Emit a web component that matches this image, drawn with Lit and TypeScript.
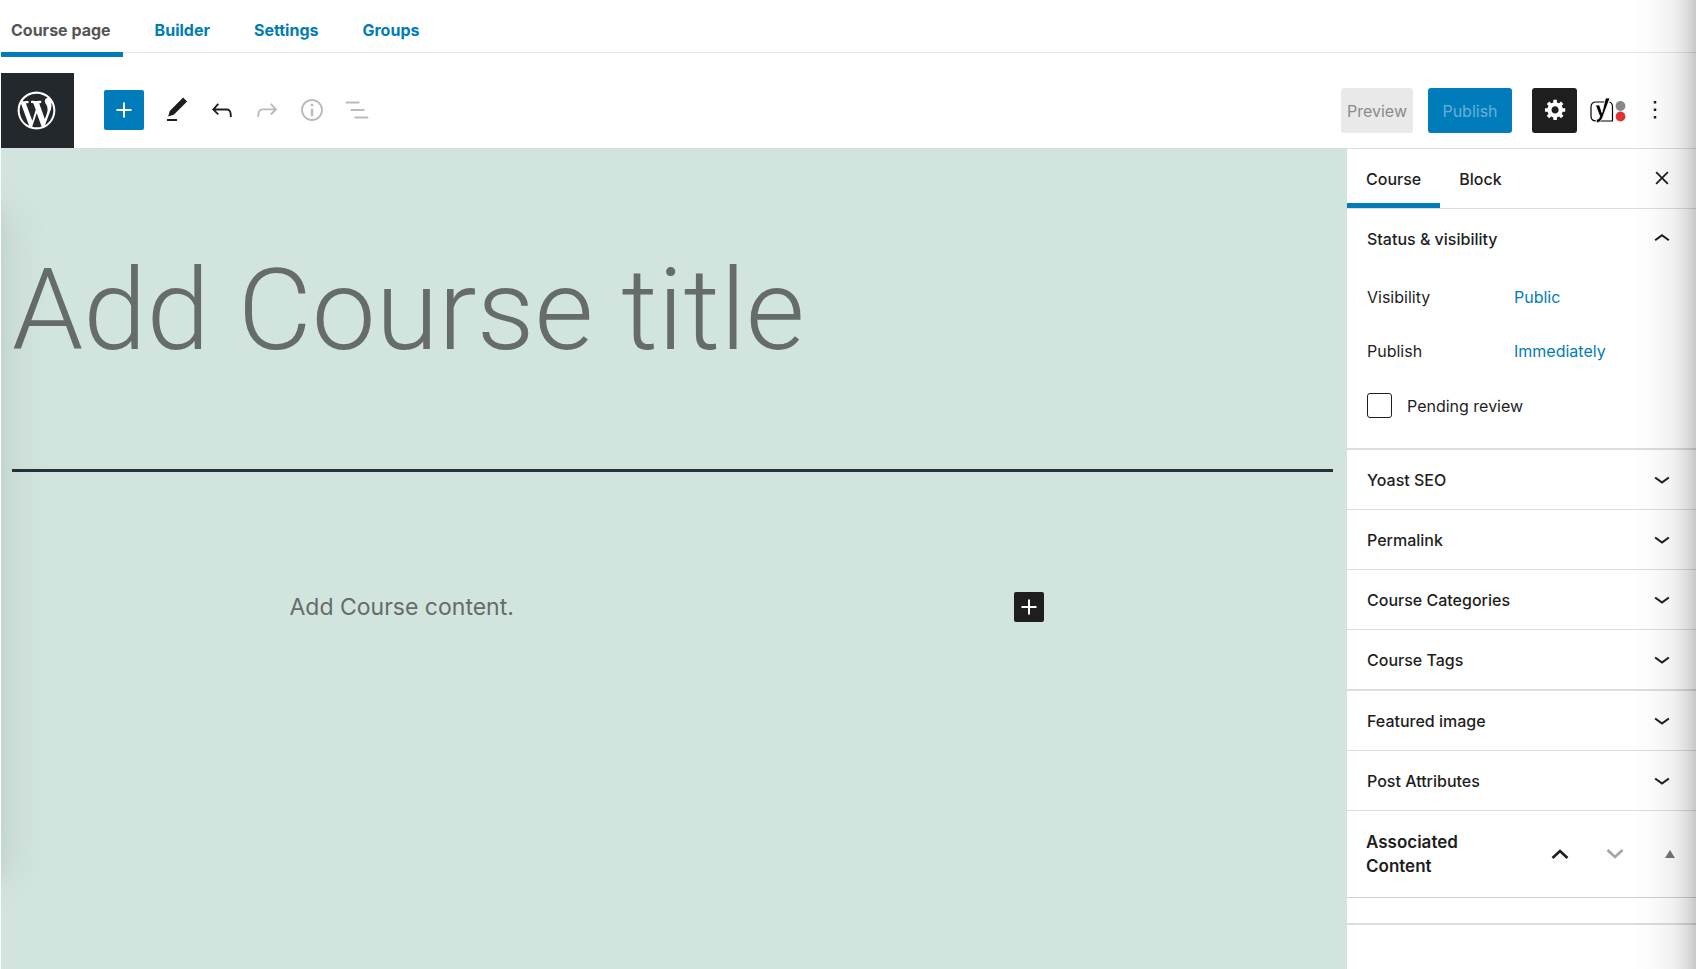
import { LitElement, html, css, svg } from "lit";
import { customElement, state } from "lit/decorators.js";

const chevronDown = html`<svg class="chev" viewBox="0 0 24 24" width="30" height="30" aria-hidden="true">
  <path d="M17 9.4L12 13 7 9.4l-1 1.2 6 4.4 6-4.4z" /></svg>`;
const chevronUp = html`<svg class="chev" viewBox="0 0 24 24" width="30" height="30" aria-hidden="true">
  <path d="M12 8l-6 4.4 1 1.2 5-3.6 5 3.6 1-1.2z" /></svg>`;
const plus = (size: number) => html`<svg viewBox="0 0 24 24" width=${size} height=${size} aria-hidden="true">
  <path d="M18 11.2h-5.2V6h-1.6v5.2H6v1.6h5.2V18h1.6v-5.2H18z" /></svg>`;

const tool = (paths: unknown) =>
  html`<svg viewBox="0 0 24 24" width="30" height="30" aria-hidden="true">${paths}</svg>`;

const tools = [
  { label: "Tools", off: false, art: svg`<path d="M20.1 5.1L16.9 2 6.2 12.7l-1.3 4.4 4.5-1.3L20.1 5.1zM4 19.2V20.8H12V19.2H4z" /> ` },
  { label: "Undo", off: false, art: svg`<path d="M18.3 11.7c-.6-.6-1.4-.9-2.3-.9H6.7l2.9-3.3-1.1-1-4.5 5L8.5 16l1-1-2.7-2.7H16c.5 0 .9.2 1.3.5 1 1 1 3.4 1 4.500v.3h1.500v-.2c0-1.500 0-4.300-1.500-5.700z" />` },
  { label: "Redo", off: true, art: svg`<path d="M15.600 6.500l-1.100 1 2.900 3.300H8c-.9 0-1.700.3-2.300.9-1.400 1.500-1.400 4.200-1.400 5.600v.2h1.500v-.3c0-1.100 0-3.500 1-4.500.3-.3.7-.5 1.300-.5h9.200L14.500 15l1.100 1.100 4.600-4.600-4.600-5z" />` },
  { label: "Details", off: true, art: svg`<path d="M12 3.200c-4.800 0-8.800 3.900-8.800 8.800 0 4.800 3.900 8.800 8.800 8.800 4.800 0 8.800-3.900 8.800-8.800 0-4.800-4-8.800-8.800-8.800zm0 16c-4 0-7.200-3.300-7.200-7.200C4.800 8 8 4.800 12 4.800s7.200 3.300 7.200 7.200c0 4-3.200 7.200-7.200 7.200zM11 17h2v-6h-2v6zm0-8h2V7h-2v2z" />` },
  { label: "Outline", off: true, art: svg`<path d="M3 5.200h11v1.600H3zM7 11.200h11v1.600H7zM10 17.200h11v1.600H10z" />` },
];

@customElement("app-root")
export class AppRoot extends LitElement {
  @state() private pending = false;

  static styles = css`
    :host {
      display: block;
      --blue: #007cba;
      --ink: #1e1e1e;
      --line: #ddd;
      font-family: Inter, "Liberation Sans", sans-serif;
      font-size: 16px;
      line-height: 24px;
      color: var(--ink);
    }
    * { box-sizing: border-box; }
    a { color: var(--blue); text-decoration: none; }
    button {
      font: inherit;
      color: inherit;
      background: none;
      border: 0;
      padding: 0;
      cursor: pointer;
    }
    svg { display: block; fill: currentColor; }
    .page {
      position: relative;
      display: flex;
      flex-direction: column;
      min-height: 100vh;
      padding-left: 1px;
      background: #fff;
    }
    .edge {
      position: absolute;
      inset: 0 0 0 auto;
      width: 64px;
      pointer-events: none;
      background: linear-gradient(to right, rgba(0, 0, 0, 0), rgba(0, 0, 0, 0.02) 35%, rgba(0, 0, 0, 0.06) 65%, rgba(0, 0, 0, 0.13) 85%, rgba(0, 0, 0, 0.22));
    }
    .tabs {
      display: flex;
      gap: 20px;
      height: 53px;
      border-bottom: 1px solid #e2e4e7;
      font-weight: 700;
    }
    .tabs a { height: 57px; padding: 18px 12px 0; }
    .tabs a.on { color: #555; border-bottom: 5px solid var(--blue); padding: 18px 12px 0 10px; }
    .bar {
      display: flex;
      align-items: center;
      height: 76px;
      margin-top: 20px;
      border-bottom: 1px solid var(--line);
    }
    .wp {
      display: flex;
      align-items: center;
      justify-content: center;
      width: 73px;
      height: 75px;
      padding-right: 2px;
      background: #23282d;
      color: #fff;
    }
    .tools { display: flex; align-items: center; gap: 15px; margin-left: 30px; padding-bottom: 2px; }
    .tools button { width: 30px; }
    .tools button:disabled { color: #bbb; }
    .tools .add, .insert {
      display: flex;
      align-items: center;
      justify-content: center;
      border-radius: 2px;
      color: #fff;
    }
    .tools .add { width: 40px; height: 40px; margin-right: 3px; background: var(--blue); }
    .actions { display: flex; align-items: center; margin-left: auto; margin-right: 26px; }
    .actions button { height: 45px; border-radius: 3px; }
    .preview { width: 72px; margin-right: 15px; background: #e9e9e9; color: #8a8a8a; }
    .publish { width: 84px; margin-right: 20px; background: var(--blue); color: #66b0d6; }
    .gear {
      display: flex;
      align-items: center;
      justify-content: center;
      width: 45px;
      margin-right: 13px;
      background: var(--ink);
      color: #fff;
    }
    .yoast { margin-right: 14px; }
    .main { display: flex; flex: 1; }
    .canvas {
      position: relative;
      flex: 1;
      min-width: 0;
      overflow: hidden;
      background: #d1e4dd;
    }
    .shade {
      position: absolute;
      left: -20px;
      top: 60px;
      width: 20px;
      bottom: 92px;
      box-shadow: 0 0 50px rgba(0, 0, 0, 0.14), 0 0 16px rgba(0, 0, 0, 0.05);
    }
    .title {
      display: block;
      margin: 0 13px 0 11px;
      padding: 83px 0 81px;
      border-bottom: 3px solid #28303d;
      font-family: Roboto, Inter, sans-serif;
      font-size: 114px;
      line-height: 156px;
      font-weight: 300;
    }
    .title input, .content input {
      display: block;
      width: 100%;
      height: 156px;
      padding: 0;
      border: 0;
      outline: 0;
      background: none;
      font: inherit;
      color: inherit;
    }
    .title input::placeholder, .content input::placeholder { color: #656c69; opacity: 1; }
    .content {
      display: flex;
      align-items: center;
      width: 768px;
      max-width: 90%;
      padding-right: 14px;
      margin: 119px auto 0;
      font-size: 23px;
      line-height: 32px;
    }
    .content input { flex: 1; height: 32px; }
    .insert { width: 30px; height: 30px; background: var(--ink); }
    .side {
      width: 350px;
      border-left: 1px solid var(--line);
      background: #fff;
      font-size: 16px;
    }
    .sidetabs { display: flex; height: 60px; border-bottom: 1px solid var(--line); font-weight: 500; }
    .sidetabs button { height: 59px; padding: 0 19px; }
    .sidetabs .on { border-bottom: 5px solid var(--blue); padding-top: 5px; }
    .sidetabs .close { margin-left: auto; padding: 0 0 2px; margin-right: 19px; }
    .panel { border-bottom: 1px solid var(--line); }
    .panel.thick { border-bottom-width: 2px; }
    .head {
      display: flex;
      align-items: center;
      justify-content: space-between;
      width: 100%;
      height: 59px;
      padding: 0 19px 0 20px;
      font-weight: 500;
      text-align: left;
    }
    .fields { display: flex; flex-direction: column; gap: 30px; padding: 17px 20px 30px; }
    .field { display: flex; height: 24px; }
    .field span { width: 147px; }
    .check { display: flex; align-items: center; gap: 15px; height: 25px; }
    .check input {
      appearance: none;
      width: 25px;
      height: 25px;
      margin: 0;
      border: 1px solid var(--ink);
      border-radius: 3px;
      background: #fff;
    }
    .check input:checked { background: var(--blue); }
    .assoc {
      display: flex;
      align-items: center;
      height: 87px;
      padding: 0 16px 0 19px;
      border-bottom: 1px solid #ccd0d4;
    }
    .assoc h2 { flex: 1; margin: 0; font-size: 17px; line-height: 24px; font-weight: 600; }
    .order { display: flex; align-items: center; }
    .order button { display: flex; align-items: center; justify-content: center; width: 55px; height: 55px; }
    .order button:disabled { color: #a0a5aa; }
    .order .fold { width: 20px; margin-left: 18px; color: #72777c; }
    .rest { height: 27px; border-bottom: 2px solid var(--line); }
  `;

  private panel(name: string, thick = false) {
    return html`<section class="panel ${thick ? "thick" : ""}">
      <button class="head" aria-expanded="false">${name}${chevronDown}</button>
    </section>`;
  }

  render() {
    return html`
      <div class="page">
        <nav class="tabs">
          <a class="on" href="#page">Course page</a>
          <a href="#builder">Builder</a>
          <a href="#settings">Settings</a>
          <a href="#groups">Groups</a>
        </nav>
        <header class="bar">
          <a class="wp" href="#home" aria-label="WordPress">
            <svg viewBox="0 0 20 20" width="45" height="45">
              <path d="M20 10c0-5.510-4.490-10-10-10C4.480 0 0 4.490 0 10c0 5.520 4.480 10 10 10 5.510 0 10-4.480 10-10zM7.780 15.370L4.370 6.220c.55-.02 1.170-.08 1.170-.08.5-.06.44-1.130-.06-1.110 0 0-1.450.11-2.370.11-.18 0-.37 0-.58-.01C4.120 2.690 6.870 1.110 10 1.110c2.330 0 4.450.87 6.050 2.340-.68-.11-1.650.39-1.650 1.580 0 .74.45 1.360.9 2.100.35.61.55 1.360.55 2.460 0 1.490-1.400 5-1.400 5l-3.030-8.370c.54-.02.82-.17.82-.17.5-.05.44-1.250-.06-1.220 0 0-1.440.12-2.380.12-.87 0-2.330-.12-2.330-.12-.5-.03-.56 1.200-.06 1.220l.92.08 1.260 3.410zM17.410 10c.24-.64.74-1.870.43-4.250.7 1.290 1.050 2.710 1.050 4.250 0 3.290-1.730 6.240-4.400 7.780.97-2.590 1.940-5.200 2.920-7.780zM6.100 18.090C3.120 16.650 1.110 13.530 1.110 10c0-1.300.23-2.480.72-3.590C3.250 10.300 4.670 14.200 6.100 18.090zm4.030-6.630l2.580 6.980c-.86.29-1.760.45-2.710.45-.79 0-1.570-.11-2.290-.33.81-2.380 1.620-4.740 2.420-7.100z" transform="translate(1.600 1.600) scale(.84)" />
            </svg>
          </a>
          <div class="tools">
            <button class="add" aria-label="Add block">${plus(30)}</button>
            ${tools.map((t) => html`<button aria-label=${t.label} ?disabled=${t.off}>${tool(t.art)}</button>`)}
          </div>
          <div class="actions">
            <button class="preview">Preview</button>
            <button class="publish">Publish</button>
            <button class="gear" aria-label="Settings">
              <svg viewBox="-1 0 21 21" width="25" height="25">
                <path fill-rule="evenodd" transform="translate(.5 -.5)" d="M18 12h-2.180c-.17.700-.44 1.350-.81 1.930l1.540 1.540-2.100 2.100-1.540-1.540c-.58.36-1.230.63-1.910.79V19H8v-2.180c-.68-.16-1.330-.43-1.910-.79l-1.540 1.540-2.120-2.120 1.540-1.540c-.36-.58-.63-1.230-.79-1.910H1V9.030h2.170c.16-.70.44-1.350.80-1.940L2.430 5.550l2.100-2.100 1.540 1.540c.58-.37 1.240-.64 1.930-.81V2h3v2.180c.68.16 1.330.43 1.910.79l1.540-1.540 2.120 2.120-1.540 1.540c.36.59.64 1.240.80 1.940H18V12zm-8.500 1.500c1.660 0 3-1.340 3-3s-1.340-3-3-3-3 1.340-3 3 1.340 3 3 3z" />
              </svg>
            </button>
            <button class="yoast" aria-label="Yoast SEO">
              <svg width="36" height="28" viewBox="0 0 36 28">
                <path d="M15 5H6Q1 5 1 10V19Q1 24 6 24H22.500V10Q22.500 6 19.500 5" fill="none" stroke="#000" stroke-width="1.200" />
                <path d="M15.500 1H20L12.500 21Q10.500 26 6.500 26V22.500Q9 22.500 9.800 19.500L5.500 8H9.500L12 15.500Z" fill="#000" stroke="#fff" stroke-width=".8" />
                <circle cx="30.500" cy="9" r="4.900" fill="#888" /><circle cx="30.500" cy="19.500" r="4.900" fill="#dc3232" />
              </svg>
            </button>
            <button aria-label="Options">
              <svg width="30" height="30" viewBox="0 0 24 24"><path d="M13 18h-2v-2h2v2zm0-6h-2v-2h2v2zm0-6h-2V4h2v2z" /></svg>
            </button>
          </div>
        </header>
        <div class="main">
          <main class="canvas">
            <div class="title"><input aria-label="Course title" placeholder="Add Course title" /></div>
            <div class="content">
              <input aria-label="Course content" placeholder="Add Course content." />
              <button class="insert" aria-label="Add block">${plus(30)}</button>
            </div>
            <div class="shade"></div>
          </main>
          <aside class="side">
            <div class="sidetabs">
              <button class="on">Course</button>
              <button>Block</button>
              <button class="close" aria-label="Close settings">
                <svg width="30" height="30" viewBox="0 0 24 24"><path d="M16.200 17.200l-4.200-4.200-4.200 4.200-1-1L11 12 6.800 7.800l1-1 4.200 4.200 4.200-4.200 1 1L13 12l4.200 4.200z" /></svg>
              </button>
            </div>
            <section class="panel thick">
              <button class="head" aria-expanded="true">Status &amp; visibility${chevronUp}</button>
              <div class="fields">
                <div class="field"><span>Visibility</span><a href="#visibility">Public</a></div>
                <div class="field"><span>Publish</span><a href="#schedule">Immediately</a></div>
                <label class="check">
                  <input type="checkbox" .checked=${this.pending}
                    @change=${(e: Event) => (this.pending = (e.target as HTMLInputElement).checked)} />
                  Pending review
                </label>
              </div>
            </section>
            ${this.panel("Yoast SEO")} ${this.panel("Permalink")} ${this.panel("Course Categories")}
            ${this.panel("Course Tags", true)} ${this.panel("Featured image")} ${this.panel("Post Attributes")}
            <div class="assoc">
              <h2>Associated<br />Content</h2>
              <div class="order">
                <button aria-label="Move up">
                  <svg width="18" height="12" viewBox="0 0 18 12"><path d="M1.500 10L9 3l7.500 7" fill="none" stroke="currentColor" stroke-width="2.600" /></svg>
                </button>
                <button aria-label="Move down" disabled>
                  <svg width="18" height="12" viewBox="0 0 18 12"><path d="M1.500 2L9 9l7.500-7" fill="none" stroke="currentColor" stroke-width="2.600" /></svg>
                </button>
                <button class="fold" aria-label="Toggle panel">
                  <svg width="10" height="8" viewBox="0 0 10 8"><path d="M5 0l5 8H0z" /></svg>
                </button>
              </div>
            </div>
            <div class="rest"></div>
          </aside>
        </div>
        <div class="edge"></div>
      </div>
    `;
  }
}
